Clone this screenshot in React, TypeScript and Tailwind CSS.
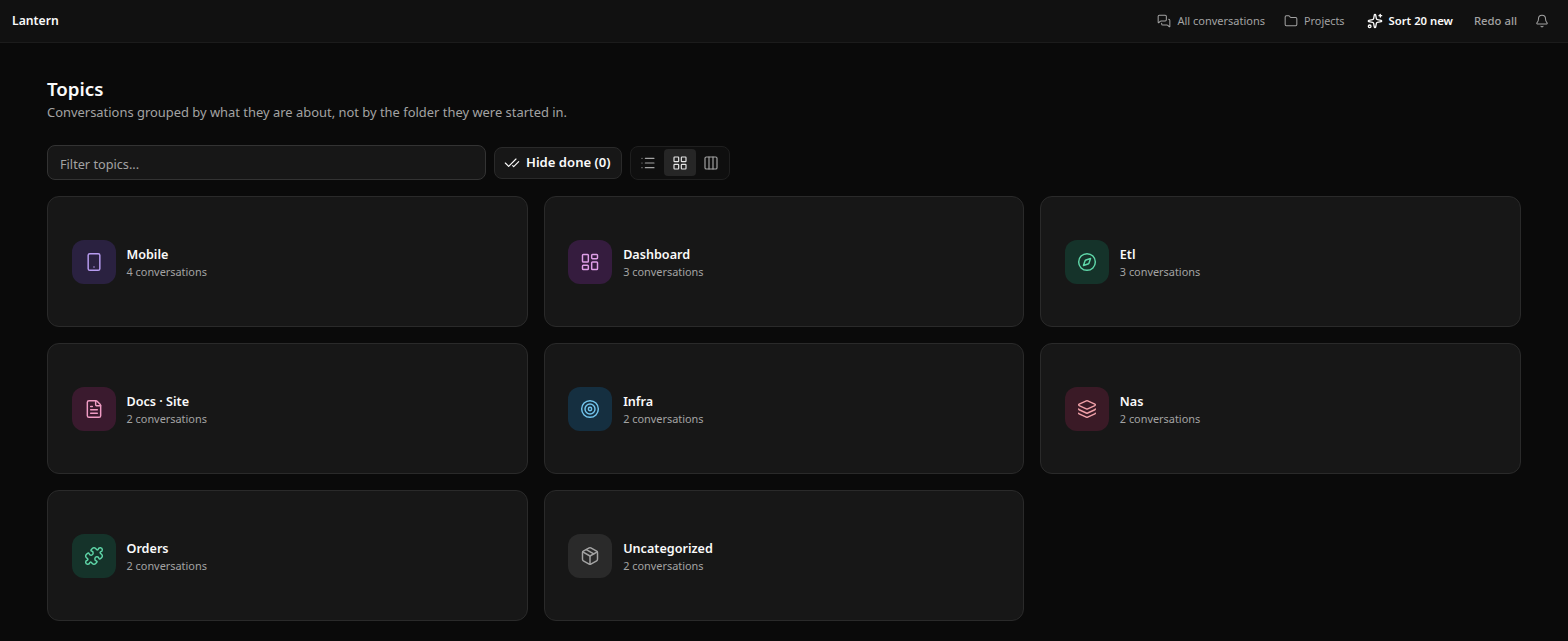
import React from "react";
import {
  Bell,
  CheckCheck,
  Columns3,
  Compass,
  FileText,
  Folder,
  Layers,
  LayoutDashboard,
  LayoutGrid,
  List,
  MessagesSquare,
  Package,
  Puzzle,
  Smartphone,
  Sparkles,
  Target,
} from "lucide-react";

const topics = [
  { name: "Mobile", count: 4, Icon: Smartphone, tile: "bg-[#2a2140]", color: "text-[#b79cf0]" },
  { name: "Dashboard", count: 3, Icon: LayoutDashboard, tile: "bg-[#351c3e]", color: "text-[#df9fe8]" },
  { name: "Etl", count: 3, Icon: Compass, tile: "bg-[#15332a]", color: "text-[#5fd6a8]" },
  { name: "Docs · Site", count: 2, Icon: FileText, tile: "bg-[#3a1a2e]", color: "text-[#f09cc4]" },
  { name: "Infra", count: 2, Icon: Target, tile: "bg-[#152f40]", color: "text-[#72c4ec]" },
  { name: "Nas", count: 2, Icon: Layers, tile: "bg-[#3a1a26]", color: "text-[#f0a0a8]" },
  { name: "Orders", count: 2, Icon: Puzzle, tile: "bg-[#15332a]", color: "text-[#5fd6a8]" },
  { name: "Uncategorized", count: 2, Icon: Package, tile: "bg-[#2a2a2a]", color: "text-[#a3a3a3]" },
];

function TopicCard({ name, count, Icon, tile, color }: (typeof topics)[number]) {
  return (
    <div className="h-[131px] flex items-center gap-[11px] pl-[23.5px] pr-6 rounded-xl border border-[#2a2a2a] bg-[#171717]">
      <div className={`w-11 h-11 rounded-xl flex items-center justify-center shrink-0 ${tile}`}>
        <Icon size={20} strokeWidth={1.75} className={color} />
      </div>
      <div className="flex flex-col">
        <span className="text-[12.6px] leading-[22px] font-semibold text-[#fafafa]">{name}</span>
        <span className="-mt-[2px] text-[10.9px] leading-4 text-[#a3a3a3]">{count} conversations</span>
      </div>
    </div>
  );
}

export default function App() {
  return (
    <div className="min-h-[641px] bg-[#0a0a0a] font-['Noto_Sans','Open_Sans',sans-serif]">
      {/* Top bar */}
      <header className="h-[43px] flex items-center justify-between pl-3 pr-[19px] bg-[#111111] border-b border-[#1c1c1c]">
        <span className="text-[12.2px] font-semibold text-[#fafafa]">Lantern</span>
        <nav className="flex items-center text-[11px] text-[#a3a3a3]">
          <span className="flex items-center gap-[6px] mr-[19px]">
            <MessagesSquare size={14} strokeWidth={1.75} />
            All conversations
          </span>
          <span className="flex items-center gap-[6px] mr-[22px] text-[10.8px]">
            <Folder size={14} strokeWidth={1.75} />
            Projects
          </span>
          <span className="flex items-center gap-[6px] mr-[21px] text-[11.3px] font-semibold text-[#fafafa]">
            <Sparkles size={16} strokeWidth={2} />
            Sort 20 new
          </span>
          <span className="mr-[18px] text-[11.3px] font-medium">Redo all</span>
          <Bell size={14} strokeWidth={1.75} />
        </nav>
      </header>

      <main className="px-[47px] pt-[34px]">
        <h1 className="text-[18.7px] leading-6 font-semibold text-[#fafafa]">Topics</h1>
        <p className="mt-px text-[12.93px] leading-5 text-[#a3a3a3]">
          Conversations grouped by what they are about, not by the folder they were started in.
        </p>

        {/* Filter row */}
        <div className="mt-[23px] flex items-center gap-2">
          <input
            placeholder="Filter topics..."
            className="w-[439px] h-[35px] px-3 pt-[2px] rounded-lg border border-[#333333] bg-[#171717] text-[12.7px] text-[#fafafa] placeholder:text-[#a3a3a3] outline-none"
          />
          <button className="h-8 pl-[9px] pr-[10px] flex items-center gap-[6px] rounded-lg border border-[#2a2a2a] bg-[#171717] text-[13.1px] font-semibold text-[#fafafa]">
            <CheckCheck size={16} strokeWidth={1.75} />
            Hide done (0)
          </button>
          <div className="h-[34px] px-[2px] flex items-center rounded-lg border border-[#1f1f1f] bg-[#0f0f0f] text-[#a3a3a3]">
            <span className="w-[31px] h-[27px] flex items-center justify-center">
              <List size={16} strokeWidth={1.75} />
            </span>
            <span className="w-[32px] h-[27px] flex items-center justify-center rounded bg-[#262626] text-[#e5e5e5]">
              <LayoutGrid size={16} strokeWidth={1.75} />
            </span>
            <span className="w-[31px] h-[27px] flex items-center justify-center">
              <Columns3 size={16} strokeWidth={1.75} />
            </span>
          </div>
        </div>

        <div className="mt-4 grid grid-cols-3 gap-4">
          {topics.map((t) => (
            <TopicCard key={t.name} {...t} />
          ))}
        </div>
      </main>
    </div>
  );
}
